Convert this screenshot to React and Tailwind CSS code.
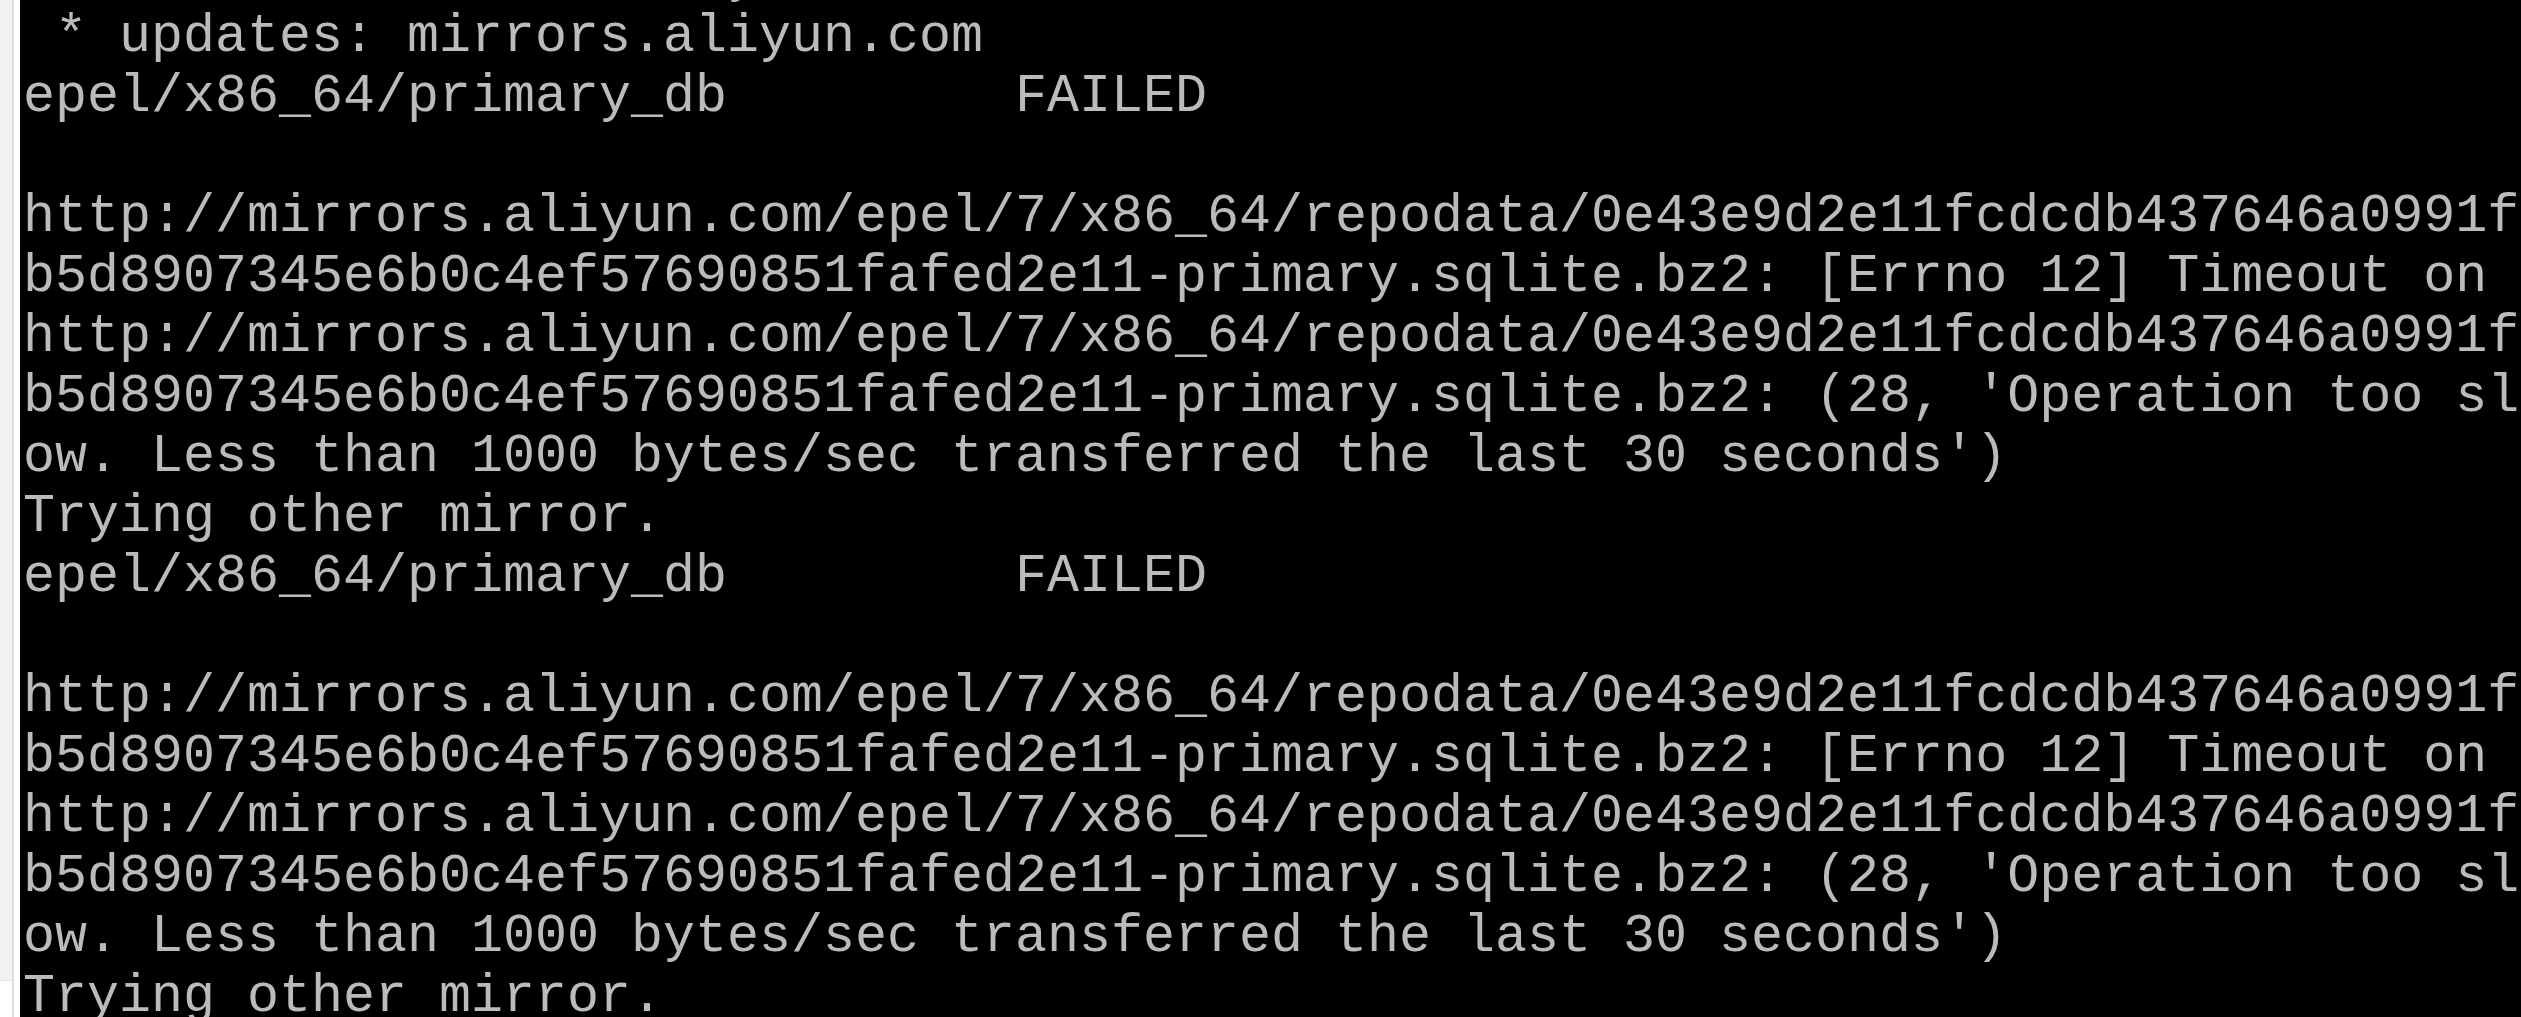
const URL1 = "http://mirrors.aliyun.com/epel/7/x86_64/repodata/0e43e9d2e11fcdcdb437646a0991f";
const HASH2 = "b5d8907345e6b0c4ef57690851fafed2e11-primary.sqlite.bz2:";

const block = [
    "epel/x86_64/primary_db         FAILED",
    "",
    URL1,
    HASH2 + " [Errno 12] Timeout on ",
    URL1,
    HASH2 + " (28, 'Operation too sl",
    "ow. Less than 1000 bytes/sec transferred the last 30 seconds')",
    "Trying other mirror.",
];

const lines = [
    " * extras: mirrors.aliyun.com",
    " * updates: mirrors.aliyun.com",
    ...block,
    ...block,
];

export default function App() {
    return (
        <div className="flex h-[1017px] w-[2521px] overflow-hidden bg-black">
            {/* window edge on the left */}
            <div className="flex w-[20px] shrink-0">
                <div className="flex w-[12px] flex-col bg-white">
                    <div className="h-[981px] border-b border-[#e3e3e3] bg-[#f2f2f2]"></div>
                </div>
                <div className="w-[2px] bg-[#dedede]"></div>
                <div className="w-[6px] bg-white"></div>
            </div>

            <main className="flex-1 overflow-hidden pl-[3px] text-[#bbbbbb] font-['Liberation_Mono','Courier_New',monospace] text-[53.33px] leading-[60px]">
                <div className="-mt-[53px]">
                    {lines.map((line, index) => {
                        return (
                            <div key={index} className="h-[60px] whitespace-pre">
                                {line}
                            </div>
                        );
                    })}
                </div>
            </main>
        </div>
    );
}
